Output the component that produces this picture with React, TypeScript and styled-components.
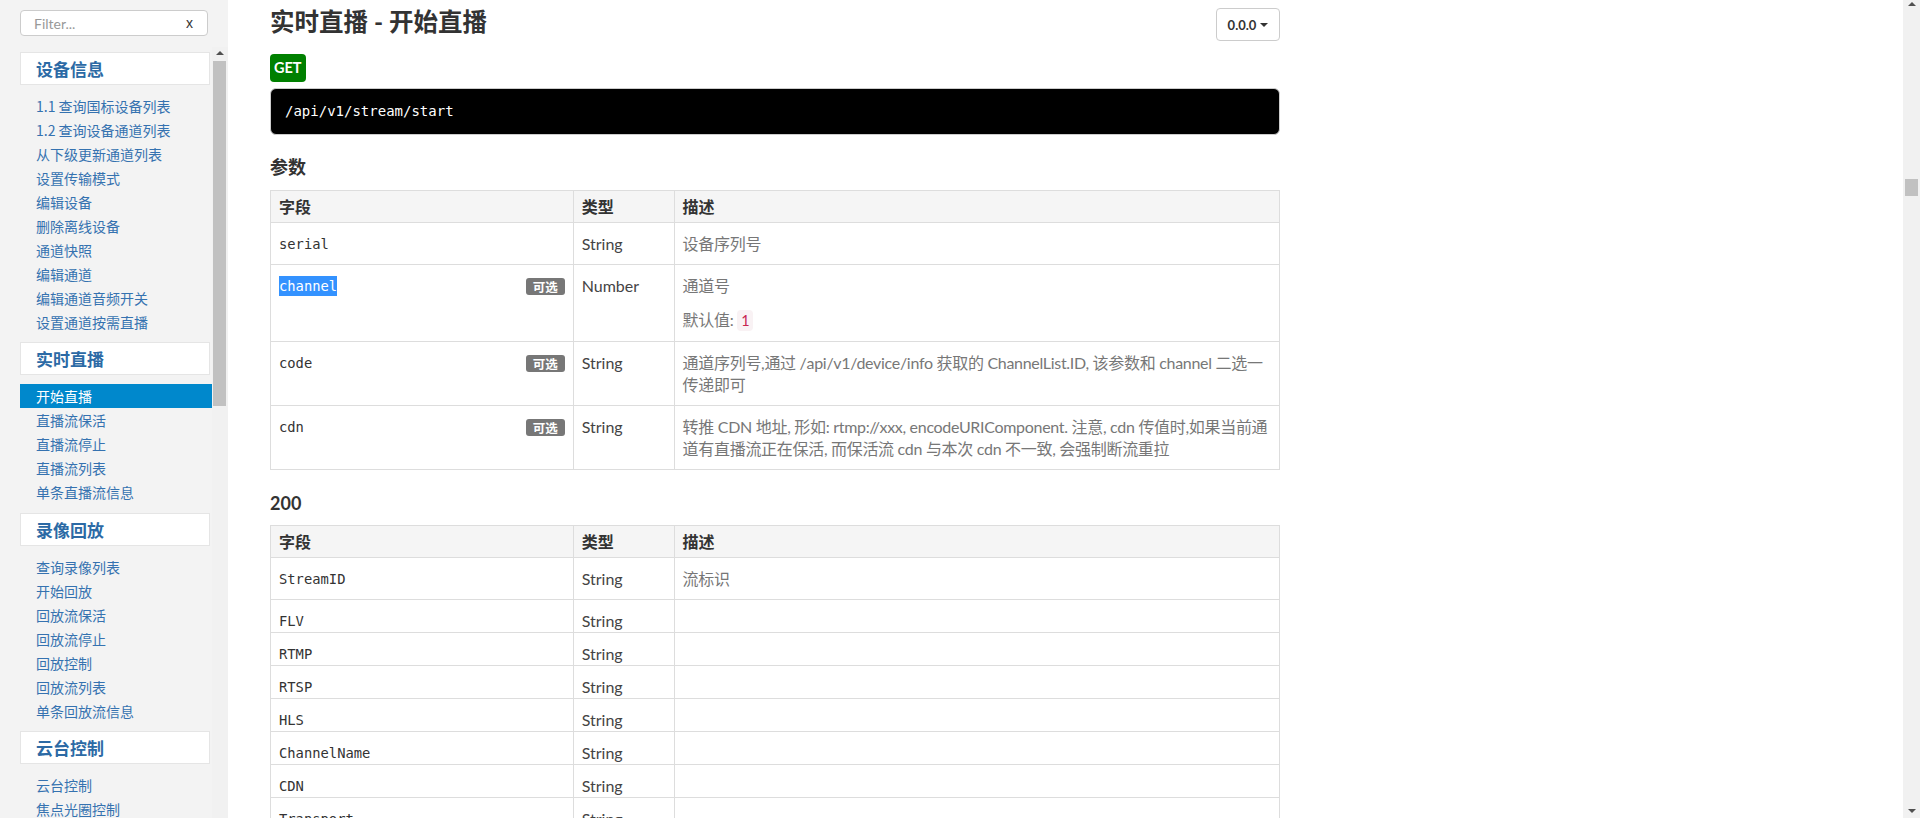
import { ReactNode, RefObject, useCallback, useLayoutEffect, useRef, useState } from 'react'
import styled, { createGlobalStyle } from 'styled-components'

type Param = {
  name: string
  type: string
  desc?: string[]
  optional?: boolean
  defaultValue?: string
  selected?: boolean
}

type Group = { title: string; path: string; items: [string, string][] }

const groups: Group[] = [
  {
    title: '设备信息',
    path: 'device',
    items: [
      ['1.1 查询国标设备列表', 'list'],
      ['1.2 查询设备通道列表', 'channellist'],
      ['从下级更新通道列表', 'fetchcatalog'],
      ['设置传输模式', 'setcommandtransport'],
      ['编辑设备', 'save'],
      ['删除离线设备', 'remove'],
      ['通道快照', 'channelsnap'],
      ['编辑通道', 'savechannel'],
      ['编辑通道音频开关', 'setchannelaudio'],
      ['设置通道按需直播', 'setchannelondemand'],
    ],
  },
  {
    title: '实时直播',
    path: 'stream',
    items: [
      ['开始直播', 'start'],
      ['直播流保活', 'touch'],
      ['直播流停止', 'stop'],
      ['直播流列表', 'list'],
      ['单条直播流信息', 'info'],
    ],
  },
  {
    title: '录像回放',
    path: 'playback',
    items: [
      ['查询录像列表', 'recordlist'],
      ['开始回放', 'start'],
      ['回放流保活', 'touch'],
      ['回放流停止', 'stop'],
      ['回放控制', 'control'],
      ['回放流列表', 'list'],
      ['单条回放流信息', 'info'],
    ],
  },
  {
    title: '云台控制',
    path: 'control',
    items: [
      ['云台控制', 'ptz'],
      ['焦点光圈控制', 'fi'],
      ['预置位查询', 'presetlist'],
      ['预置位控制', 'preset'],
      ['看守位控制', 'homeposition'],
      ['巡航轨迹查询', 'cruiselist'],
      ['巡航控制', 'cruise'],
    ],
  },
  {
    title: '国标级联',
    path: 'cascade',
    items: [
      ['级联列表', 'list'],
      ['添加级联', 'save'],
      ['删除级联', 'remove'],
      ['级联通道列表', 'channellist'],
      ['选择级联通道', 'savechannels'],
      ['移除级联通道', 'removechannels'],
      ['级联启用', 'setenable'],
    ],
  },
  {
    title: '录像计划',
    path: 'record',
    items: [
      ['录像计划列表', 'planlist'],
      ['编辑录像计划', 'saveplan'],
      ['删除录像计划', 'removeplan'],
      ['录像计划通道', 'planchannels'],
      ['云端录像列表', 'querydaily'],
    ],
  },
  {
    title: '报警管理',
    path: 'alarm',
    items: [
      ['报警订阅', 'subscribe'],
      ['取消报警订阅', 'unsubscribe'],
      ['报警列表', 'list'],
      ['删除报警', 'remove'],
    ],
  },
  {
    title: '用户管理',
    path: 'user',
    items: [
      ['登录', 'login'],
      ['登出', 'logout'],
      ['修改密码', 'modifypassword'],
      ['用户列表', 'list'],
      ['添加用户', 'save'],
      ['删除用户', 'remove'],
    ],
  },
  {
    title: '系统配置',
    path: 'config',
    items: [
      ['获取基础配置', 'base'],
      ['修改基础配置', 'setbase'],
      ['获取 SIP 配置', 'sip'],
      ['修改 SIP 配置', 'setsip'],
      ['获取存储配置', 'storage'],
      ['修改存储配置', 'setstorage'],
      ['版本信息', 'version'],
      ['重启服务', 'restart'],
    ],
  },
]

const activeKey = 'stream/start'

const startParams: Param[] = [
  { name: 'serial', type: 'String', desc: ['设备序列号'] },
  { name: 'channel', type: 'Number', desc: ['通道号'], optional: true, defaultValue: '1', selected: true },
  {
    name: 'code',
    type: 'String',
    optional: true,
    desc: ['通道序列号,通过 /api/v1/device/info 获取的 ChannelList.ID, 该参数和 channel 二选一传递即可'],
  },
  {
    name: 'cdn',
    type: 'String',
    optional: true,
    desc: [
      '转推 CDN 地址, 形如: rtmp://xxx, encodeURIComponent. 注意, cdn 传值时,如果当前通道有直播流正在保活, 而保活流 cdn 与本次 cdn 不一致, 会强制断流重拉',
    ],
  },
]

const startResults: Param[] = [
  { name: 'StreamID', type: 'String', desc: ['流标识'] },
  ...['FLV', 'RTMP', 'RTSP', 'HLS', 'ChannelName', 'CDN', 'Transport', 'StartAt', 'RecordStartAt', 'SnapURL', 'WS_FLV', 'WEBRTC'].map(
    (name) => ({ name, type: 'String' })
  ),
]

const commonParams: Param[] = [
  { name: 'serial', type: 'String', desc: ['设备序列号'] },
  { name: 'channel', type: 'Number', desc: ['通道号'], optional: true, defaultValue: '1' },
  { name: 'code', type: 'String', desc: ['通道序列号'], optional: true },
]

const deviceParams: Param[] = [
  ...commonParams,
  { name: 'start', type: 'Number', desc: ['分页开始,从零开始'], optional: true },
  { name: 'limit', type: 'Number', desc: ['分页大小'], optional: true },
  { name: 'q', type: 'String', desc: ['搜索关键字'], optional: true },
  { name: 'online', type: 'Boolean', desc: ['在线状态'], optional: true },
  { name: 'sort', type: 'String', desc: ['排序字段'], optional: true },
]

const commonResults: Param[] = [
  { name: 'Code', type: 'Number', desc: ['状态码'] },
  { name: 'Message', type: 'String', desc: ['提示信息'] },
  { name: 'DeviceID', type: 'String', desc: ['设备国标编号'] },
  { name: 'ChannelID', type: 'String', desc: ['通道国标编号'] },
]

const sans = `Lato, 'Noto Sans CJK SC', sans-serif`
const mono = `'DejaVu Sans Mono', monospace`

const GlobalStyle = createGlobalStyle`
  html, body {
    margin: 0;
    height: 100%;
    overflow: hidden;
  }
  body {
    font-family: ${sans};
    color: #333;
    background: #fff;
  }
  * {
    box-sizing: border-box;
  }
`

// custom scrollbar: native one is hidden, track + thumb are drawn from the scroll state
type Bar = { width: number; left: number; right: number; arrowTop: number }
const BUTTON = 14

const ScrollFrame = styled.div`
  display: flex;
  min-height: 0;
`

const ScrollBody = styled.div`
  flex: 1;
  min-width: 0;
  height: 100%;
  overflow-y: scroll;
  scrollbar-width: none;

  &::-webkit-scrollbar {
    display: none;
  }
`

const Track = styled.div<{ $w: number }>`
  position: relative;
  flex: none;
  width: ${(p) => p.$w}px;
  height: 100%;
  background: #f1f1f1;
`

const ArrowButton = styled.div<{ $dir: 'up' | 'down'; $offset: number }>`
  position: absolute;
  left: 0;
  right: 0;
  ${(p) => (p.$dir === 'up' ? 'top: 0;' : 'bottom: 0;')}
  height: ${BUTTON}px;
  display: flex;
  justify-content: center;
  align-items: flex-start;
  padding-top: ${(p) => p.$offset}px;

  &::after {
    content: '';
    width: 0;
    height: 0;
    border-left: 4px solid transparent;
    border-right: 4px solid transparent;
    ${(p) => (p.$dir === 'up' ? 'border-bottom: 4px solid #505050;' : 'border-top: 4px solid #505050;')}
  }
`

const Thumb = styled.div<{ $l: number; $r: number }>`
  position: absolute;
  left: ${(p) => p.$l}px;
  right: ${(p) => p.$r}px;
  background: #c1c1c1;
`

function ScrollArea({
  children,
  bar,
  anchor,
  className,
}: {
  children: ReactNode
  bar: Bar
  anchor?: RefObject<HTMLElement | null>
  className?: string
}) {
  const bodyRef = useRef<HTMLDivElement>(null)
  const [thumb, setThumb] = useState({ top: BUTTON, height: 0 })

  const update = useCallback(() => {
    const el = bodyRef.current
    if (!el) return
    const track = el.clientHeight - BUTTON * 2
    const height = Math.max(17, (track * el.clientHeight) / el.scrollHeight)
    const range = el.scrollHeight - el.clientHeight
    const top = BUTTON + (range > 0 ? ((track - height) * el.scrollTop) / range : 0)
    setThumb({ top, height })
  }, [])

  useLayoutEffect(() => {
    const el = bodyRef.current
    const target = anchor?.current
    if (el && target) el.scrollTop += target.getBoundingClientRect().top - el.getBoundingClientRect().top
    update()
  }, [anchor, update])

  return (
    <ScrollFrame className={className}>
      <ScrollBody ref={bodyRef} onScroll={update}>
        {children}
      </ScrollBody>
      <Track $w={bar.width}>
        <ArrowButton $dir='up' $offset={bar.arrowTop} />
        <Thumb $l={bar.left} $r={bar.right} style={{ top: thumb.top, height: thumb.height }} />
        <ArrowButton $dir='down' $offset={5} />
      </Track>
    </ScrollFrame>
  )
}

const Shell = styled.div`
  display: flex;
  height: 100vh;
`

const Sidebar = styled.aside`
  flex: none;
  width: 228px;
  height: 100vh;
  overflow: hidden;
  padding-left: 20px;
  background: #f3f3f3;
`

const Filter = styled.div`
  display: flex;
  align-items: center;
  margin-top: 10px;
  width: 188px;
  height: 26px;
  padding: 0 14px 0 13px;
  border: 1px solid #ccc;
  border-radius: 4px;
  background: #fff;
`

const FilterInput = styled.input`
  flex: 1;
  min-width: 0;
  border: none;
  outline: none;
  padding: 0;
  background: transparent;
  font: 14px ${sans};
  color: #555;

  &::placeholder {
    color: #999;
  }
`

const ClearButton = styled.span`
  font: 14px 'Liberation Sans', sans-serif;
  color: #333;
  cursor: pointer;
`

const NavArea = styled(ScrollArea)`
  margin-top: 11px;
  width: 208px;
  height: 100vh;
`

const NavList = styled.nav`
  padding-top: 4.5px;
`

const NavGroup = styled.ul`
  list-style: none;
  margin: 0;
  padding: 0 0 8.5px;
`

const NavHeader = styled.li`
  width: 190px;
  height: 33px;
  margin-bottom: 9px;
  padding-left: 15px;
  border: 1px solid #e5e5e5;
  background: #fff;
  font-family: 'Noto Sans CJK SC', sans-serif;
  font-size: 17px;
  font-weight: bold;
  line-height: 31px;
  color: #2c6aa5;
`

const NavLink = styled.a<{ $active?: boolean }>`
  display: block;
  height: 24px;
  padding-left: 16px;
  font-family: 'Noto Sans CJK SC', sans-serif;
  font-size: 14px;
  line-height: 24px;
  white-space: nowrap;
  text-decoration: none;
  color: ${(p) => (p.$active ? '#fff' : '#3572b0')};
  background: ${(p) => (p.$active ? '#0088cc' : 'transparent')};
`

const MainArea = styled(ScrollArea)`
  flex: 1;
  height: 100vh;
`

const Article = styled.article`
  width: 1010px;
  margin-left: 42px;
  padding: 8px 0 40px;
`

const TitleRow = styled.div`
  display: flex;
  justify-content: space-between;
  align-items: flex-start;
`

const Title = styled.h1`
  margin: 0;
  font-size: 24.5px;
  line-height: 28px;
  font-weight: bold;
  color: #333;
`

const VersionButton = styled.button`
  display: flex;
  justify-content: center;
  align-items: center;
  gap: 4px;
  width: 64px;
  height: 33px;
  padding: 0;
  border: 1px solid #ccc;
  border-radius: 4px;
  background: #fff;
  font: bold 13px ${sans};
  color: #333;
`

const Caret = styled.span`
  width: 0;
  height: 0;
  border-top: 4px solid #333;
  border-left: 4px solid transparent;
  border-right: 4px solid transparent;
`

const Method = styled.div<{ $method: string }>`
  width: fit-content;
  margin-top: 13px;
  height: 28px;
  padding: 0 4px;
  border-radius: 4px;
  background: ${(p) => (p.$method === 'POST' ? '#4070ec' : '#008000')};
  color: #fff;
  font-size: 14.5px;
  font-weight: bold;
  line-height: 28px;
`

const Endpoint = styled.pre`
  margin: 6px 0 0;
  padding: 12px 14px;
  border: 1px solid #ccc;
  border-radius: 6px;
  background: #000;
  color: #fff;
  font: 14px/21px ${mono};
`

const Heading = styled.h2<{ $top: number; $bottom: number }>`
  margin: ${(p) => p.$top}px 0 ${(p) => p.$bottom}px;
  font-size: 18px;
  line-height: 20px;
  font-weight: bold;
  color: #333;
`

const Table = styled.table`
  width: 100%;
  table-layout: fixed;
  border-collapse: collapse;
  font-size: 16px;
  line-height: 22px;
`

const Th = styled.th<{ $w: string }>`
  width: ${(p) => p.$w};
  padding: 4.5px 8px;
  border: 1px solid #ddd;
  background: #f5f5f5;
  text-align: left;
  font-weight: bold;
  color: #333;
`

const Td = styled.td<{ $tight?: boolean }>`
  padding: 9.5px 8px ${(p) => (p.$tight ? 0.5 : 9.5)}px;
  border: 1px solid #ddd;
  vertical-align: top;
`

const FieldCell = styled(Td)`
  font-family: ${mono};
  font-size: 13.8px;
  color: #333;
`

const TypeCell = styled(Td)`
  color: #444;
`

const DescCell = styled(Td)`
  color: #777;
  letter-spacing: -0.3px;
`

const Selected = styled.span`
  display: inline-block;
  line-height: 20px;
  background: #3392ff;
  color: #fff;
`

const OptionalLabel = styled.span`
  float: right;
  margin-top: 3px;
  height: 17px;
  padding: 0 7px;
  border-radius: 3px;
  background: #777;
  color: #fff;
  font-family: 'Noto Sans CJK SC', sans-serif;
  font-size: 12.5px;
  font-weight: bold;
  line-height: 17px;
`

const Para = styled.p`
  margin: 0;

  & + & {
    margin-top: 12px;
  }
`

const DefaultValue = styled.code`
  padding: 2px 4px;
  border-radius: 4px;
  background: #f9f2f4;
  color: #c7254e;
  font-family: inherit;
  font-size: 90%;
`

function FieldTable({ rows }: { rows: Param[] }) {
  return (
    <Table>
      <thead>
        <tr>
          <Th $w='30%'>字段</Th>
          <Th $w='10%'>类型</Th>
          <Th $w='60%'>描述</Th>
        </tr>
      </thead>
      <tbody>
        {rows.map((r) => {
          const tight = !r.desc && !r.defaultValue
          return (
            <tr key={r.name}>
              <FieldCell $tight={tight}>
                {r.optional && <OptionalLabel>可选</OptionalLabel>}
                {r.selected ? <Selected>{r.name}</Selected> : r.name}
              </FieldCell>
              <TypeCell $tight={tight}>{r.type}</TypeCell>
              <DescCell $tight={tight}>
                {r.desc?.map((d) => <Para key={d}>{d}</Para>)}
                {r.defaultValue && (
                  <Para>
                    默认值: <DefaultValue>{r.defaultValue}</DefaultValue>
                  </Para>
                )}
              </DescCell>
            </tr>
          )
        })}
      </tbody>
    </Table>
  )
}

type Section = {
  key: string
  title: string
  method: string
  url: string
  params: Param[]
  results: Param[]
}

const sections: Section[] = groups.flatMap((g) =>
  g.items.map(([label, slug]) => {
    const key = `${g.path}/${slug}`
    const isStart = key === activeKey
    return {
      key,
      title: `${g.title} - ${label}`,
      method: /save|set|remove|login|logout|modify|restart/.test(slug) ? 'POST' : 'GET',
      url: `/api/v1/${key}`,
      params: isStart ? startParams : g.path === 'device' ? deviceParams : commonParams,
      results: isStart ? startResults : commonResults,
    }
  })
)

export default function App() {
  const activeRef = useRef<HTMLElement>(null)

  return (
    <Shell>
      <GlobalStyle />
      <Sidebar>
        <Filter>
          <FilterInput placeholder='Filter...' />
          <ClearButton>x</ClearButton>
        </Filter>
        <NavArea bar={{ width: 16, left: 1, right: 2, arrowTop: 4 }}>
          <NavList>
            {groups.map((g) => (
              <NavGroup key={g.path}>
                <NavHeader>{g.title}</NavHeader>
                {g.items.map(([label, slug]) => (
                  <li key={slug}>
                    <NavLink href={`#${g.path}-${slug}`} $active={`${g.path}/${slug}` === activeKey}>
                      {label}
                    </NavLink>
                  </li>
                ))}
              </NavGroup>
            ))}
          </NavList>
        </NavArea>
      </Sidebar>
      <MainArea bar={{ width: 17, left: 2, right: 2, arrowTop: 2 }} anchor={activeRef}>
        {sections.map((s) => (
          <Article key={s.key} ref={s.key === activeKey ? activeRef : undefined}>
            <TitleRow>
              <Title>{s.title}</Title>
              <VersionButton>
                0.0.0
                <Caret />
              </VersionButton>
            </TitleRow>
            <Method $method={s.method}>{s.method}</Method>
            <Endpoint>{s.url}</Endpoint>
            <Heading $top={22} $bottom={13}>
              参数
            </Heading>
            <FieldTable rows={s.params} />
            <Heading $top={23} $bottom={12}>
              200
            </Heading>
            <FieldTable rows={s.results} />
          </Article>
        ))}
      </MainArea>
    </Shell>
  )
}
